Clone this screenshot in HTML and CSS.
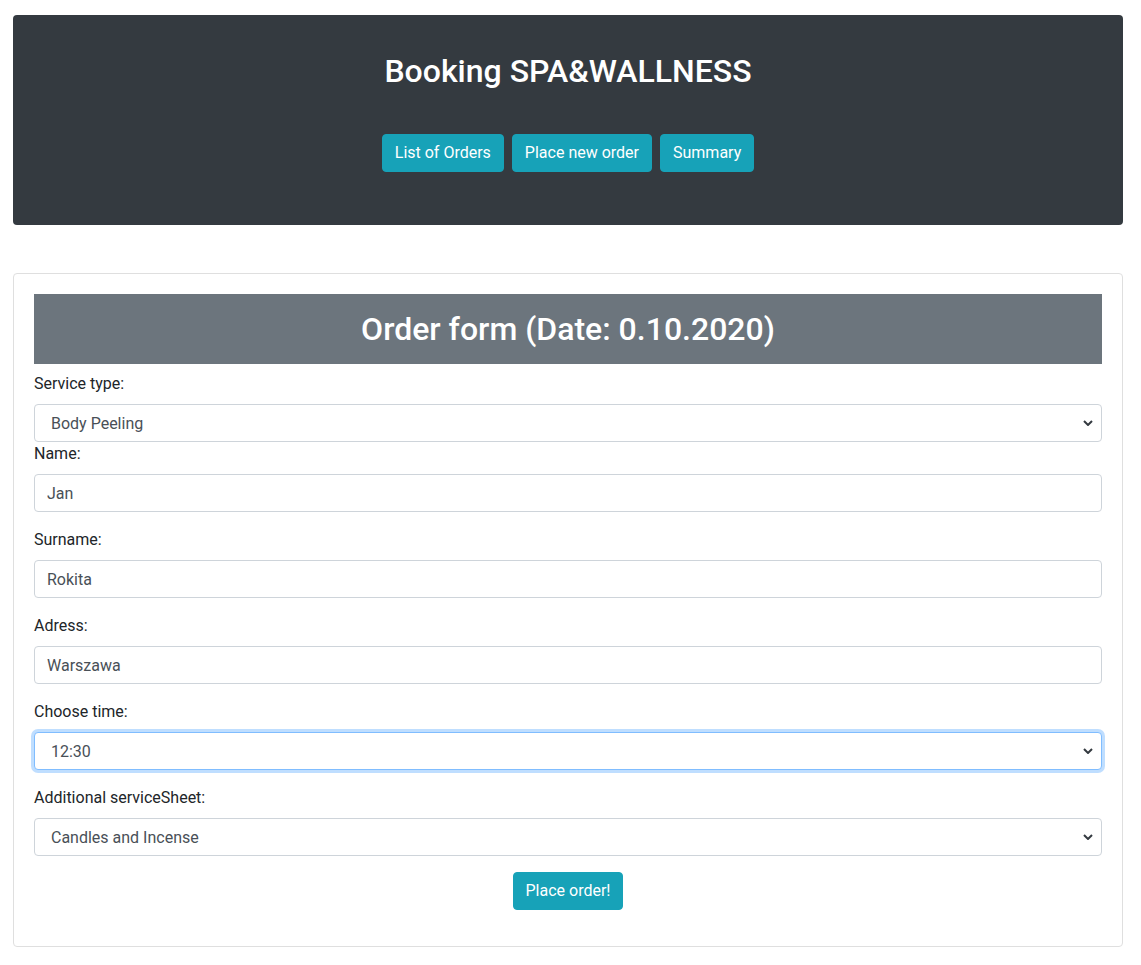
FILE: index.html
```html
<!DOCTYPE html>
<html lang="en">
<head>
<meta charset="utf-8">
<title>Booking SPA&amp;WALLNESS</title>
<link rel="stylesheet" href="styles.css">
</head>
<body>
<div class="page">
  <header class="hero">
    <h1 class="hero-title">Booking SPA&amp;WALLNESS</h1>
    <nav class="hero-nav">
      <button class="btn">List of Orders</button>
      <button class="btn">Place new order</button>
      <button class="btn">Summary</button>
    </nav>
  </header>

  <section class="card">
    <h2 class="form-title">Order form (Date: 0.10.2020)</h2>
    <form class="form">
      <label class="label">Service type:</label>
      <select class="control select"><option>Body Peeling</option></select>
      <div class="group">
        <label class="label">Name:</label>
        <input class="control" type="text" value="Jan">
      </div>
      <div class="group">
        <label class="label">Surname:</label>
        <input class="control" type="text" value="Rokita">
      </div>
      <div class="group">
        <label class="label">Adress:</label>
        <input class="control" type="text" value="Warszawa">
      </div>
      <div class="group">
        <label class="label">Choose time:</label>
        <select class="control select focused"><option>12:30</option></select>
      </div>
      <div class="group">
        <label class="label">Additional serviceSheet:</label>
        <select class="control select"><option>Candles and Incense</option></select>
      </div>
      <div class="group center">
        <button type="button" class="btn">Place order!</button>
      </div>
    </form>
  </section>
</div>
</body>
</html>
```

FILE: styles.css
```css
* { box-sizing: border-box; }
html, body { margin: 0; padding: 0; background: #fff; }
body {
  font-family: Roboto, "Liberation Sans", sans-serif;
  font-size: 16px;
  line-height: 1.5;
  color: #212529;
}
.page {
  width: 1110px;
  margin-left: 13px;
  padding-top: 15px;
}
.hero {
  background: #343a40;
  border-radius: 4px;
  height: 210px;
  padding: 37px 16px 0;
  text-align: center;
}
.hero-title {
  margin: 0 0 44px;
  font-size: 32px;
  line-height: 38px;
  font-weight: 500;
  color: #fff;
}
.hero-nav {
  display: flex;
  justify-content: center;
  gap: 8px;
}
.btn {
  font-family: inherit;
  font-size: 16px;
  line-height: 24px;
  padding: 6px 12px;
  border: 1px solid #17a2b8;
  border-radius: 4px;
  background: #17a2b8;
  color: #fff;
  cursor: pointer;
}
.card {
  margin-top: 48px;
  border: 1px solid #dfdfdf;
  border-radius: 4px;
  padding: 20px 20px 20px;
}
.form-title {
  margin: 0 0 8px;
  height: 70px;
  background: #6c757d;
  color: #fff;
  font-size: 32px;
  font-weight: 500;
  display: flex;
  align-items: center;
  justify-content: center;
}
.form { display: flex; flex-direction: column; }
.label {
  display: block;
  line-height: 24px;
  margin-bottom: 8px;
}
.group { margin-bottom: 16px; }
.control {
  display: block;
  width: 100%;
  height: 38px;
  padding: 6px 12px;
  font-family: inherit;
  font-size: 16px;
  line-height: 24px;
  color: #495057;
  background: #fff;
  border: 1px solid #ced4da;
  border-radius: 4px;
  outline: none;
}
.select {
  -webkit-appearance: none;
  appearance: none;
  padding: 7px 12px 5px 16px;
  background-image: url("data:image/svg+xml,%3Csvg xmlns='http://www.w3.org/2000/svg' width='10' height='6' viewBox='0 0 10 6'%3E%3Cpath d='M1 1l4 4 4-4' fill='none' stroke='%23343a40' stroke-width='2'/%3E%3C/svg%3E");
  background-repeat: no-repeat;
  background-position: right 8px center;
  background-size: 10px 6px;
}
.focused {
  border-color: #80bdff;
  box-shadow: 0 0 0 3px rgba(0, 123, 255, 0.25);
}
.center { display: flex; justify-content: center; }
```
